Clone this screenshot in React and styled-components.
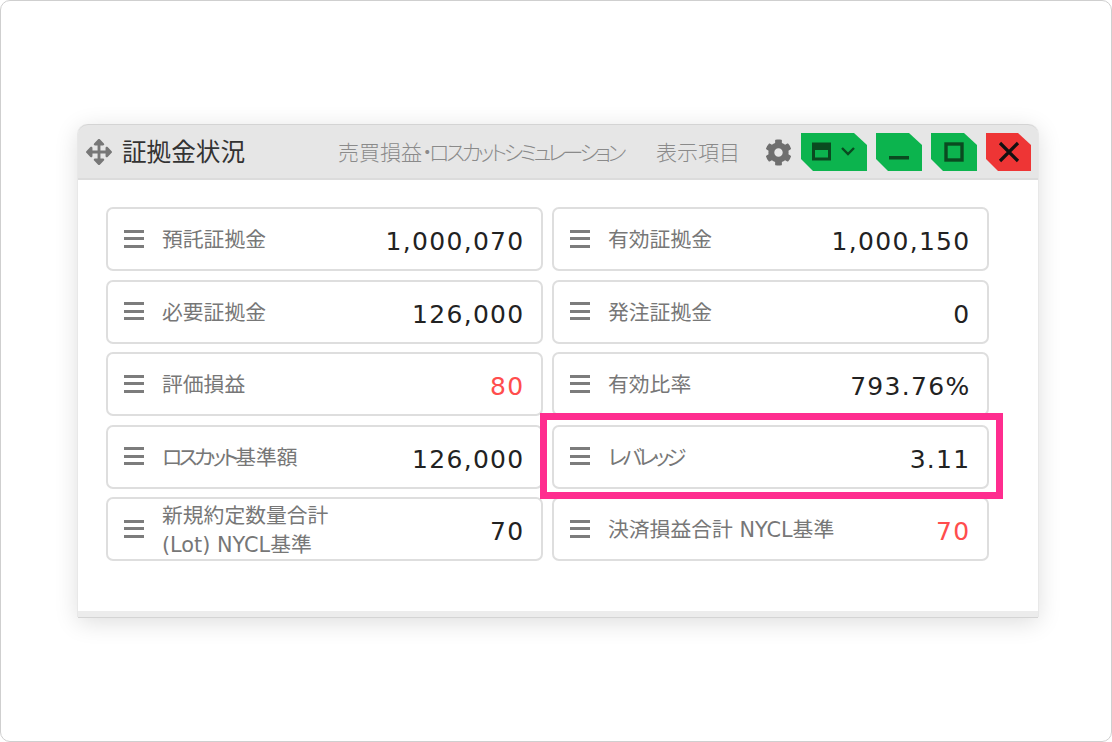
import React from "react";
import styled, { createGlobalStyle } from "styled-components";
import { FaCog, FaArrowsAlt } from "react-icons/fa";

const Global = createGlobalStyle`
  html, body { margin: 0; padding: 0; background: #fff; }
  body { font-family: "DejaVu Sans", "Noto Sans CJK JP", sans-serif; }
`;
const Frame = styled.div`
  box-sizing: border-box; width: 1112px; height: 742px;
  border: 1px solid #cfcfcf; border-radius: 10px; background: #fff;
  padding: 123px 0 0 77px; overflow: hidden;
`;
const Win = styled.div`
  position: relative; box-sizing: border-box; width: 960px; height: 493px;
  background: #fff; border-radius: 10px 10px 0 0;
  border-bottom: 6px solid #ececec;
  box-shadow: 0 1px 0 #d4d4d4, -1px 0 0 #e8e8e8, 1px 0 0 #e8e8e8, 0 5px 24px rgba(0,0,0,.14);
`;
const TitleBar = styled.div`
  display: flex; align-items: center; height: 56px; box-sizing: border-box;
  background: #e6e6e6; border-radius: 10px 10px 0 0; padding: 0 7px 0 8px;
  border-top: 1px solid #d4d4d4; border-bottom: 2px solid #dcdcdc;
`;
const MoveIcon = styled(FaArrowsAlt)`
  width: 26px; height: 26px; color: #777; flex: none; margin-right: 10px; margin-top: 1px;
`;
const Title = styled.div`
  font-size: 24.6px; line-height: 1; color: #333; white-space: nowrap; margin-top: 4px;
`;
const Links = styled.div`
  display: flex; margin-left: auto; gap: 33px; margin-right: 25px; align-items: center;
  margin-top: 3px;
`;
const Link = styled.span`
  font-size: 21px; line-height: 1; color: #8a8a8a; white-space: nowrap; font-weight: 300;
`;
const Kana = styled.span`
  font-feature-settings: "palt"; letter-spacing: ${p => p.$s}px;
`;
const Gear = styled(FaCog)`
  width: 27px; height: 27px; color: #6f6f6f; flex: none; margin-right: 9px; margin-top: 1px;
`;
const WinBtns = styled.div`
  display: flex; gap: 9px; align-items: center; margin-top: 1px;
`;
const WinBtn = styled.div`
  width: ${p => p.$w}px; height: 38px; flex: none;
  background: ${p => p.$red ? "#ee3535" : "#0cb44e"};
  clip-path: polygon(0 0, calc(100% - 13px) 0, 100% 12px, 100% 100%, 12px 100%, 0 calc(100% - 12px));
  display: flex; align-items: center; justify-content: center;
`;
const Grid = styled.div`
  display: grid; grid-template-columns: 437px 437px; column-gap: 9px;
  grid-auto-rows: 64px; row-gap: 8.5px; padding: 27px 28px;
`;
const Card = styled.div`
  box-sizing: border-box; display: flex; align-items: center;
  border: 2px solid #dedede; border-radius: 7px; padding: 0 16.5px 0 16px;
`;
const Handle = styled.div`
  width: 20px; height: 18px; flex: none; margin-right: 18px; margin-top: -1px;
  display: flex; flex-direction: column; justify-content: space-between;
  & > i { display: block; height: 3px; background: #7c7c7c; }
`;
const Label = styled.div`
  font-size: 20.8px; line-height: 29px; color: #777; flex: 1;
  margin-top: 3px; white-space: pre-line;
`;
const Value = styled.div`
  font-family: "DejaVu Sans", sans-serif; font-size: 25px; line-height: 1;
  letter-spacing: 1.3px; color: ${p => p.$red ? "#ff4d4d" : "#222"}; margin-top: 5px;
`;
const Highlight = styled.div`
  position: absolute; left: 462px; top: 289px; width: 463px; height: 86px;
  box-sizing: border-box; border: 7px solid #ff2d8f; pointer-events: none;
`;

const rows = [
  [<>預託証拠金</>, "1,000,070"],
  [<>有効証拠金</>, "1,000,150"],
  [<>必要証拠金</>, "126,000"],
  [<>発注証拠金</>, "0"],
  [<>評価損益</>, "80", true],
  [<>有効比率</>, "793.76%"],
  [<><Kana $s={-3.5}>ロスカット</Kana>基準額</>, "126,000"],
  [<Kana $s={-3.7}>レバレッジ</Kana>, "3.11"],
  [<>{"新規約定数量合計\n(Lot) NYCL基準"}</>, "70"],
  [<>決済損益合計 NYCL基準</>, "70", true],
];

export default function App() {
  return (
    <>
      <Global />
      <Frame>
        <Win>
          <TitleBar>
            <MoveIcon />
            <Title>証拠金状況</Title>
            <Links>
              <Link>売買損益<Kana $s={-3.4}>・ロスカットシミュレーション</Kana></Link>
              <Link>表示項目</Link>
            </Links>
            <Gear />
            <WinBtns>
              <WinBtn $w={66}>
                <svg width="44" height="20" viewBox="0 0 44 20">
                  <rect x="1.5" y="2" width="16" height="15" fill="none" stroke="#0a4a20" strokeWidth="3" />
                  <rect x="1.5" y="2" width="16" height="6" fill="#0a4a20" />
                  <path d="M30 6l6 6 6-6" fill="none" stroke="#0a4a20" strokeWidth="2.4" />
                </svg>
              </WinBtn>
              <WinBtn $w={46}>
                <svg width="20" height="20" viewBox="0 0 20 20"><rect x="0" y="14" width="20" height="3.5" fill="#0a4a20" /></svg>
              </WinBtn>
              <WinBtn $w={46}>
                <svg width="20" height="20" viewBox="0 0 20 20"><rect x="2" y="2" width="16" height="16" fill="none" stroke="#0a4a20" strokeWidth="3.4" /></svg>
              </WinBtn>
              <WinBtn $w={45} $red>
                <svg width="22" height="22" viewBox="0 0 22 22"><path d="M2 2l18 18M20 2L2 20" stroke="#111" strokeWidth="3.2" /></svg>
              </WinBtn>
            </WinBtns>
          </TitleBar>
          <Grid>
            {rows.map(([l, v, red], i) => (
              <Card key={i}>
                <Handle><i /><i /><i /></Handle>
                <Label>{l}</Label>
                <Value $red={red}>{v}</Value>
              </Card>
            ))}
          </Grid>
          <Highlight />
        </Win>
      </Frame>
    </>
  );
}
